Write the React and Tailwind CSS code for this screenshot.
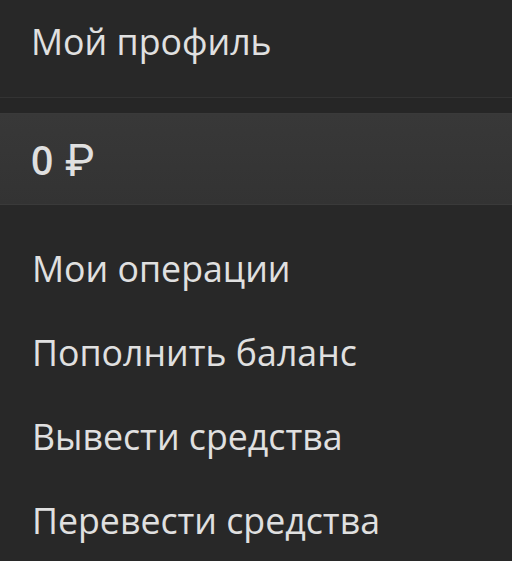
import React from "react";

const items = ["Мои операции", "Пополнить баланс", "Вывести средства", "Перевести средства"];

export default function App() {
  return (
    <div className="w-[512px] h-[561px] overflow-hidden bg-[#282828] text-[#e0e0e0] font-['Open_Sans',sans-serif]">
      {/* Profile header */}
      <div className="h-[97px] px-[31px] pt-[16px] text-[35.7px] leading-[50px]">Мой профиль</div>
      <div className="h-[16px] border-t border-[#333333] bg-[#262626]" />

      {/* Balance */}
      <div className="h-[92px] border-t border-b border-[#3a3a3a] bg-gradient-to-b from-[#383838] to-[#333333] px-[31px] flex items-center">
        <span className="text-[39px] font-semibold leading-none">0</span>
        <span className="ml-[12px] mt-[3px] text-[44px] font-['Roboto',sans-serif] font-normal leading-none">₽</span>
      </div>

      {/* Menu */}
      <div className="pt-[38px] px-[32px] flex flex-col">
        {items.map((t) => (
          <div key={t} className="h-[84px] text-[35.7px] leading-[50px]">
            {t}
          </div>
        ))}
      </div>
    </div>
  );
}
